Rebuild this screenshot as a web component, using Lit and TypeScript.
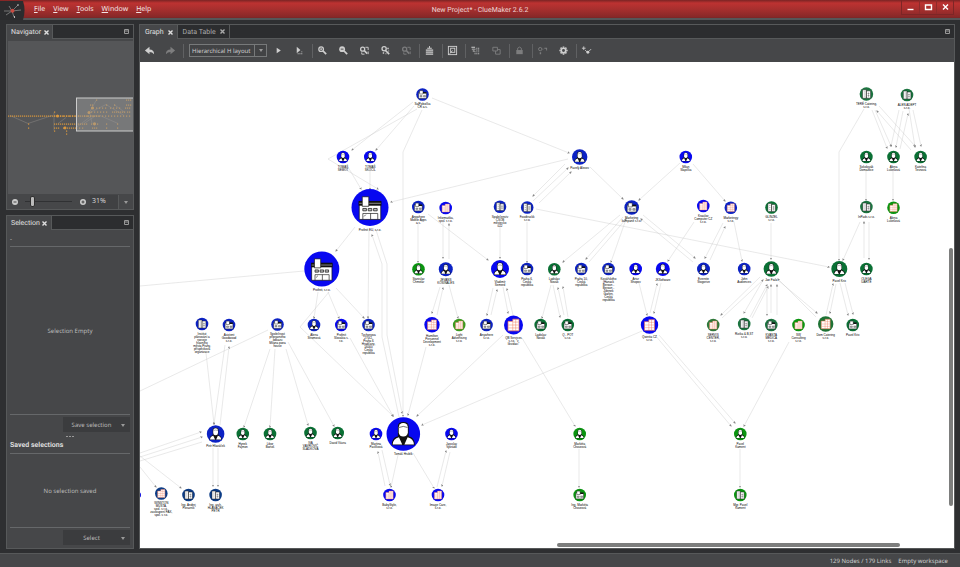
import { LitElement, html, css, svg } from "lit";
import { customElement, state } from "lit/decorators.js";

type Kind = "person" | "shop" | "office" | "firm" | "hq";
type NodeRow = [number, number, number, string, Kind, string];

const B = "#0808f0", V = "#0c22c4", N = "#0c3c86", G = "#0a7034", T = "#1c7440", L = "#0a9410";

/* x, y, radius, colour, pictogram, caption lines */
const nodes: NodeRow[] = [
  [422.5, 94.5, 6.3, V, "shop", "SalPobočka|ČR a.s."],
  [343, 157, 6.3, B, "person", "TOMÁŠ|SEMOT"],
  [370.3, 157, 6.3, B, "person", "TOMÁŠ|SKOČIL"],
  [579.7, 157, 7.7, V, "person", "Pavelý Alexov"],
  [685.8, 157, 6.3, B, "person", "Milan|Slapička"],
  [866.4, 94, 6.8, T, "office", "TERÉ Catering,|s.r.o."],
  [907, 95, 6.3, T, "office", "ALEN ADEPT|s.r.o."],
  [866.4, 157, 6.3, G, "person", "Sokolovák|Domažlice"],
  [893.5, 157, 6.3, G, "person", "Alena|Lukešová"],
  [920.6, 157, 6.3, G, "person", "Kateřina|Tesnová"],
  [370, 207.5, 18.5, B, "hq", "Profinit EU, s.r.o."],
  [418.3, 207, 6.3, V, "shop", "Anywhere|Mobile Apps|a.s."],
  [445.7, 208, 6.3, B, "firm", "Informatika,|spol. s r.o."],
  [500, 206.7, 6.3, V, "office", "Společenstv|ČSOB|městecko|022"],
  [527.2, 207.5, 6.3, V, "office", "Foodtruckk|s.r.o."],
  [631.7, 207.5, 7.3, V, "shop", "Marketing|kampaně s.r.o."],
  [703.3, 206, 6.3, B, "firm", "Krasilov|Computer CZ|s.r.o."],
  [730.8, 207.7, 6.3, V, "firm", "Marketingy|s.r.o."],
  [771.5, 207.5, 6.3, G, "office", "GLINZEL|s.r.o."],
  [866.4, 207, 6.3, T, "office", "InPads s.r.o."],
  [893.5, 207.7, 6.3, L, "firm", "Alena|Lukešová"],
  [321.8, 269, 17.5, B, "hq", "Profinit, s.r.o."],
  [418.5, 269.3, 6.3, L, "person", "Stanislav|Chmelár"],
  [445.8, 269.3, 7, V, "person", "JEVANS|KOSINALES"],
  [500, 269, 9, B, "person", "Vladimír|Semerd"],
  [527, 269, 6.3, V, "shop", "Praha 6,|Česká|republika"],
  [554.3, 269.3, 6.3, G, "person", "Ladislav|Novák"],
  [581.3, 269, 6.3, V, "shop", "Praha 10,|Česká|republika"],
  [608.5, 269, 6.3, V, "shop", "Kovářského|(Hanack|Beroun -|Beroun -|Zdenek|Garlen,|Česká|republika"],
  [635.7, 269, 6.3, B, "person", "Artur|Shopov"],
  [662.8, 269, 7, B, "person", "JKSoftware"],
  [703.5, 269, 6.5, V, "person", "Evernite|Stogorive"],
  [744.2, 269, 6.3, V, "person", "John|Audiences"],
  [771.3, 269, 7.7, G, "person", "Jan Fiala"],
  [839.3, 269, 8, G, "person", "Pavel Krix"],
  [866.4, 269, 6.3, G, "person", "OLEGA|UARTE"],
  [202, 324, 6.3, V, "office", "Institut|plánování a|rozvoje|hlavního|města Prahy,|příspěvková|organizace"],
  [229, 325, 6.3, V, "shop", "Asistent|Goodwood|s.r.o."],
  [277.5, 324.5, 6.3, V, "shop", "Společnost|přípravného|odkazu|Milana pana|house"],
  [314, 325, 6.3, V, "person", "Alena|Stromová"],
  [341.3, 325, 6.3, B, "shop", "Profinit|Slovakia s.|r.o."],
  [368.5, 325, 6.3, V, "shop", "Tychonova|270/2,|Praha 6|Hradčany,|16000|Česká|republika"],
  [432, 324.7, 7.7, B, "firm", "Hamilton|Personnel|Development|s.r.o."],
  [459.2, 325, 6.3, "#3b9a20", "firm", "Light|Advertising|s.r.o."],
  [486.5, 325, 6.3, V, "shop", "Anywhere|s.r.o."],
  [513.5, 325, 9.5, B, "firm", "QB Services|s.r.o. “v|likvidaci”"],
  [540.7, 325, 6.3, G, "shop", "Ladislav|Novák"],
  [567.8, 325, 6.3, G, "shop", "Q - POT|s.r.o."],
  [649.5, 325, 8.7, B, "firm", "Qwintia CZ|s.r.o."],
  [713.2, 325, 6.3, "#30783a", "firm", "SERVIS|CENTER,|s.r.o."],
  [744.2, 324, 6.3, T, "office", "Rizika & B,ST|s.r.o."],
  [771.3, 325, 6.3, T, "shop", "KVANTA|MEDICA|s.r.o."],
  [798.5, 325, 6.3, L, "firm", "SW|Consulting|s.r.o."],
  [825.7, 324, 7.7, "#1e7234", "firm", "Dom Catering|s.r.o."],
  [852.8, 325, 6.3, G, "shop", "Pavel Krix"],
  [215.6, 434, 8.8, V, "person", "Petr Hlaváček"],
  [242.8, 434, 6.3, G, "person", "Hynek|Fajmon"],
  [270, 434, 6.3, G, "person", "Libor|Bartoš"],
  [310.5, 433, 6.3, G, "person", "IVA|VÁVROVIČ|SLÁDKOVÁ"],
  [337.7, 433, 6.3, G, "person", "David Vávra"],
  [376, 434, 6.3, B, "person", "Martina|Pavlíková"],
  [403.3, 434, 16.8, B, "person", "Tomáš Hrubík"],
  [451.5, 434, 6.3, B, "person", "Jaroslav|Vykrádil"],
  [579.7, 434, 6.3, L, "person", "Markéta|Chourová"],
  [740.3, 434, 6.3, L, "person", "Pavel|Kament"],
  [138, 495, 3, B, "office", ""],
  [161.3, 493.5, 6.3, N, "firm", "WINSTON|MUSTA,|spol. s r.o.,|zastoupení FAX,|spol. s r.o."],
  [188.5, 495, 6.3, N, "office", "Ing. Andrej|Porazník"],
  [215.6, 495, 6.3, N, "office", "Ing. arch.|HLAVÁČEK|PETR"],
  [389.5, 495, 6.3, B, "firm", "BabyStyle,|s.r.o."],
  [438, 495, 6.3, B, "firm", "Image Care,|s.r.o."],
  [579.7, 495, 6.3, L, "shop", "Ing. Markéta|Chourová"],
  [740.3, 495, 6.3, L, "office", "Mgr. Pavel|Kament"],
];

const edges = `413,102 352,150|414,106 376,150|417,109 328,159 378,189|422,110 403,152 403,416|432,98 569,153|568,159 391,202
565,164 533,196|533,201 568,168|539,203 571,172|590,167 623,199|348,167 361,189|370,170 370,189|536,209 829,267
680,163 639,200|693,164 725,201|864,109 839,152 839,260|872,110 887,148|875,110 891,146|879,106 915,146|911,150 877,111
899,110 891,146|903,111 896,147|900,149 908,114|909,109 915,147|913,110 921,146|866,171 866,200|893,171 893,200
355,227 336,251|369,231 368,318|399,417 382,337 382,264 372,235|376,230 387,264 387,335 402,413|318,292 314,318
328,292 339,318|336,288 364,318|329,292 300,327 393,416|418,224 418,262|428,214 488,260|443,222 443,258|449,259 449,224
500,227 500,258|527,222 527,262|437,315 443,288|440,287 432,313|449,285 458,318|491,315 497,290|493,288 487,315
503,287 508,313|513,315 507,289|551,285 542,318|553,285 560,317|568,317 563,287|564,315 558,288|620,215 563,262
623,217 586,259|589,262 626,219|625,222 611,262|643,215 695,258|693,262 641,219|694,222 668,261|723,223 705,258
710,260 725,227|734,222 742,261|771,223 771,259|860,222 843,260|864,258 864,222|869,222 869,259|639,283 647,315
661,283 654,313|650,313 657,284|760,277 721,315|722,318 763,280|762,282 744,313|750,317 767,285|752,318 768,287
767,286 767,315|771,313 771,285|777,315 777,285|779,281 817,313|816,317 778,279|826,315 833,284|836,284 830,313
840,283 848,315|845,283 853,314|642,331 422,425|655,335 731,426|659,335 735,423|789,342 744,426|503,335 417,416
522,338 575,426|426,347 408,415|350,338 393,416|206,353 214,424|225,345 214,424|220,425 229,347|270,349 244,427
275,349 270,427|286,349 308,425|288,342 334,426|140,453 201,432|140,457 202,437|140,456 181,488|140,467 156,487
213,448 213,486|218,448 218,486|385,486 378,452|382,450 390,485|398,455 391,487|413,453 434,488|437,487 446,451
450,452 442,486|579,449 579,487|740,449 740,487`.split(/[|\n]/);

const plainEdges = ["304,271 140,286", "268,330 140,391", "202,442 140,461"];

const pictogram = (k: Kind) => {
  switch (k) {
    case "person":
      return svg`<path class="ink" d="M-10.600 10.300Q-10.600 3-5 2V-7Q-5-11 0-11T5-7V2Q10.600 3 10.600 10.300Z"/>
        <path class="paper" d="M-9.800 9.600Q-9.400 4.200-4 3L-1 9.600ZM9.800 9.600Q9.400 4.200 4 3L1 9.600Z"/>
        <rect class="paper" x="-4.200" y="-10.200" width="8.400" height="12.600" rx="4"/>
        <path class="hair" d="M-4-6Q0-8 4-6"/>`;
    case "hq":
      return svg`<path class="paper fine" d="M-9-5H9V10H-9Z"/><path class="ink" d="M-9.500-5.500H9.500V-1.500H-9.500Z"/>
        <path class="hatch" d="M-9-3.500H9"/><path class="paper fine" d="M-6.500-9H-1V-1H-6.500Z"/>
        <path class="grey fine" d="M-6 .8h3v2h-3zM-1.500 .8h3v2h-3zM3 .8h3v2h-3z"/><path class="hair" d="M-6 10V5H6.500V10M.5 5V10M-5 7.500L-3.500 6"/>`;
    case "shop":
      return svg`<path class="paper line" d="M-8-4H8V8H-8Z"/><path class="paper line" d="M-6-8H1V-1H-6Z"/>
        <path class="ink" d="M1-5H8V-2H1Z"/><path class="grey fine" d="M-5 2h4v3h-4zM2 2h4v3H2z"/>`;
    case "office":
      return svg`<path class="paper line" d="M-7.500-8H0V8H-7.500ZM0-6H8V8H0Z"/>
        <path class="hair" d="M-5-4h3M-5 0h3M-5 4h3M2-1h4M2 3h4M4-3V6"/>`;
    case "firm":
      return svg`<path class="paper warm" d="M-7.500-5H-1V-8H7.500V8H-7.500Z"/><path class="warm thin" d="M-7 0H7M-7 4H7M-1-4V8M3-8V8M-1-4H7"/>`;
  }
};

@customElement("clue-graph")
class ClueGraph extends LitElement {
  static styles = css`
    :host { display: block; position: relative; background: #fff; overflow: hidden; }
    .plane { display: block; width: 100%; height: 100%; }
    .edge { fill: none; stroke: #c8c8c8; stroke-width: 0.4; }
    .tip { fill: #888; }
    .ink { fill: #111; }
    .paper { fill: #fff; }
    .grey { fill: #bbb; }
    .line { stroke: #111; stroke-width: 0.9; }
    .fine { stroke: #111; stroke-width: 0.6; }
    .hair { fill: none; stroke: #222; stroke-width: 0.6; }
    .warm { stroke: #f0704c; stroke-width: 0.9; }
    .warm.thin { fill: none; stroke-width: 0.6; }
    .hatch { stroke: #777; stroke-width: 1; }
    .cap { font: 3px "Liberation Sans", Arial, sans-serif; text-anchor: middle; fill: #000; text-rendering: auto; }
    .bar { position: absolute; background: #7d7e7d; border-radius: 2px; }
    .v { right: 1px; top: 38.2%; width: 4px; height: 53.2%; }
    .h { bottom: 1px; left: 51.2%; height: 4px; width: 42.2%; }
  `;
  render() {
    return html`<svg class="plane" role="img" aria-label="Link graph">
        <defs><marker id="tip" markerUnits="userSpaceOnUse" markerWidth="3" markerHeight="3" refX="1.500" refY="1.200" orient="auto">
          <path class="tip" d="M0 0L2.500 1.200 0 2.400Z"/></marker></defs>
        <g transform="translate(-140 -62)">
          ${plainEdges.map((p) => svg`<polyline class="edge" points=${p}></polyline>`)}
          ${edges.map((p) => svg`<polyline class="edge" points=${p} marker-end="url(#tip)"></polyline>`)}
          ${nodes.map(([x, y, r, c, k, t]) => svg`
            <circle cx=${x} cy=${y} r=${r} fill=${c}></circle>
            <g transform="translate(${x} ${y}) scale(${r / (k === "person" || k === "hq" ? 15.5 : 13)})">${pictogram(k)}</g>
            ${t.split("|").map((s, i) => svg`<text class="cap" x=${x} y=${y + r + 4.5 + i * 3}>${s}</text>`)}`)}
        </g>
      </svg>
      <div class="bar v"></div><div class="bar h"></div>`;
  }
}

/* rows of the overview: start x, y, count, step */
const specks: [number, number, number, number][] = [
  [8, 115, 46, 2], [54, 111, 1, 2], [54, 115, 6, 3], [72, 115, 3, 3], [84, 115, 16, 3],
  [54, 123, 17, 2], [91, 123, 3, 3], [28, 123, 1, 2], [28, 127, 1, 2], [54, 127, 3, 2], [63, 127, 7, 2], [76, 127, 3, 3],
  [54, 130, 1, 2], [66, 130, 1, 2], [66, 133, 1, 2], [92, 127, 3, 2], [106, 123, 1, 2], [117, 123, 1, 2], [106, 127, 1, 2], [117, 127, 1, 2],
  [96, 107, 4, 3], [110, 107, 4, 3], [125, 107, 3, 2], [91, 111, 6, 3], [112, 111, 7, 2], [127, 111, 2, 2],
  [90, 104, 2, 2], [106, 104, 1, 2], [114, 104, 1, 2], [126, 104, 3, 2], [96, 99, 1, 2], [126, 99, 3, 2],
];

const I = {
  undo: svg`<path d="M1 6L6 2V5Q11 5 11 10 9 7.500 6 7.500V10Z"/>`,
  redo: svg`<path d="M11 6L6 2V5Q1 5 1 10 3 7.500 6 7.500V10Z"/>`,
  play: svg`<path d="M4 3L8.500 6 4 9Z"/>`,
  playSel: svg`<path d="M3 2L7 5.500 3 9Z"/><path d="M6 9h1v1H6zM8 9h1v1H8zM8 7h1v1H8zM4 9h1v1H4z"/>`,
  zin: svg`<circle class="h" cx="4.500" cy="4.500" r="2.500"/><path class="w" d="M6.500 6.500L10 10"/><path class="s" d="M3.500 4.500h2M4.500 3.500v2"/>`,
  zout: svg`<circle cx="4.500" cy="4.500" r="3.200"/><path class="w" d="M6.500 6.500L10 10"/><path class="d" d="M3 4.500h3"/>`,
  zfit: svg`<circle class="h" cx="4" cy="4.500" r="2.200"/><path class="w" d="M6 6.500L9 9.500"/><path class="s" d="M7 2.500h3v3M3 8v2h3M10 7v3"/>`,
  zsel: svg`<circle class="h" cx="4.500" cy="4" r="2.300"/><path class="w" d="M6 6L10 10"/><path d="M8 3h1.500v1.500H8zM9 6h1v1H9zM3 8h1.500v1.500H3zM6 9h1v1H6z"/>`,
  stack: svg`<path d="M5.500 1h1v2h2v1h-5V3h2zM2 5h8v1.300H2zM2 7.200h8v1.200H2zM2 9.200h8v1.300H2z"/>`,
  frame: svg`<rect class="s" x="1.500" y="1.500" width="9" height="9"/><rect class="s" x="4" y="3.500" width="4.500" height="4.500"/><path class="s" d="M3 9.500L6 6"/>`,
  group: svg`<path d="M1.500 2h4v1h-4zM2 4h4v1H2zM3 6h2v1H3zM7 3h1v1H7zM9 3h1v1H9zM7 5h1v1H7zM9 5h1v1H9zM5 7h1v1H5zM7 7h1v1H7zM9 7h1v1H9zM5 9h1v1H5zM7 9h1v1H7zM9 9h1v1H9z"/>`,
  ungroup: svg`<path class="s" d="M2 2.500h5v4H2zM5 6.500V10h5V5H7"/>`,
  lock: svg`<path d="M2.500 5.500h7V10h-7z"/><path class="s" d="M4 6V3.500Q6 1 8 3.500V6"/>`,
  merge: svg`<circle class="s" cx="3.500" cy="4.500" r="1.800"/><path d="M3 8h1.500v2H3zM6 4h1v1H6zM8 3h3v1H8zM10 4h1v2h-1z"/>`,
  gear: svg`<circle class="g" cx="6" cy="6" r="2.500"/><path class="g" d="M6 1.500v1.500M6 9v1.500M1.500 6H3M9 6h1.500M2.800 2.800l1 1M8.200 8.200l1 1M9.200 2.800l-1 1M3.800 8.200l-1 1"/>`,
  spark: svg`<path class="s" d="M3 1.500v4M1 3.500h4M4.500 5.500l2 2M9 6.500l2-2"/><circle cx="7.500" cy="8" r="1.600"/>`,
};

type Tool = [keyof typeof I, string, boolean?] | "sep";
const tools: Tool[] = [
  ["play", "Run layout"], ["playSel", "Run layout on selection"], "sep",
  ["zin", "Zoom in"], ["zout", "Zoom out"], ["zfit", "Fit graph"], ["zsel", "Fit selection"], ["zfit", "Zoom area", true], "sep",
  ["stack", "Extract"], "sep", ["frame", "Show frame"], "sep", ["group", "Group"], ["ungroup", "Ungroup", true], "sep",
  ["lock", "Lock", true], "sep", ["merge", "Merge", true], ["gear", "Settings"], "sep", ["spark", "Highlight"],
];

const caret = html`<svg class="caret" viewBox="0 0 4 3"><path d="M0 0H4L2 3Z"/></svg>`;

@customElement("app-root")
class AppRoot extends LitElement {
  @state() private zoom = 31;

  static styles = css`
    :host {
      display: grid; grid-template-rows: auto minmax(0, 1fr) auto; height: 100vh; min-height: 400px;
      background: #2e2f31; color: #d0d0d0; font: 6px/10px "Noto Sans", "Open Sans", sans-serif;
      text-rendering: geometricPrecision;
    }
    * { box-sizing: border-box; }
    button, input, select { font: inherit; color: inherit; text-rendering: inherit; background: none; border: 0; margin: 0; padding: 0; border-radius: 0; }
    header {
      display: grid; grid-template-columns: 1fr auto 1fr; align-items: center; height: 20px;
      background: linear-gradient(#7a2424, #bd3231 3px, #a82f2e 9px, #872828 17px, #762626 18px, #555658 18px);
    }
    .left { display: flex; align-items: center; align-self: start; height: 20px; }
    .logo { width: 25px; height: 19px; margin-right: 9px; display: block; }
    nav { display: flex; gap: 8px; color: #f4e4e4; font-size: 7px; }
    nav a { color: inherit; text-decoration: none; }
    .key { text-decoration: underline; }
    h1 { margin: 0; font: 7px/10px Roboto, sans-serif; color: #f0d8d8; }
    .wins { display: flex; justify-self: end; align-self: start; margin-right: 6px; border: 1px solid #7d2626; border-top: 0; }
    .wins button { width: 17px; height: 14px; display: grid; place-items: center; }
    .wins button + button { border-left: 1px solid #8d2b2b; }
    .wins svg { width: 9px; height: 8px; fill: none; stroke: #fff; stroke-width: 1.4; }
    main { display: grid; grid-template-columns: 128px minmax(0, 1fr); gap: 5px; padding: 4px 5px 4px 6px; min-height: 0; }
    .side { display: grid; grid-template-rows: 186px minmax(0, 1fr); gap: 5px; min-height: 0; }
    .panel { display: flex; flex-direction: column; border: 1px solid #57595a; background: #464749; min-height: 0; min-width: 0; }
    .tabs { display: flex; height: 14px; flex: none; background: #2c2d2f; border-bottom: 1px solid #57595a; font: 7px/10px Roboto, sans-serif; }
    .tab { display: flex; align-items: center; gap: 2px; padding: 0 3px 0 4px; border-right: 1px solid #57595a; color: #aaa; }
    .tab.on { background: #464749; color: #e0e0e0; height: 14px; }
    .wide .tab { gap: 4px; padding: 0 3px 0 5px; }
    .tab button { width: 6px; height: 10px; display: grid; place-items: center; }
    .tab svg { width: 5px; height: 5px; stroke: currentColor; stroke-width: 1.4; }
    .max { margin-left: auto; margin-right: 4px; width: 5px; }
    .max svg { display: block; width: 5px; height: 5px; fill: none; stroke: #999; }
    .map { flex: 1; min-height: 0; margin: 2px 0 0 1px; background: #555658; }
    .map svg { display: block; width: 100%; height: 100%; }
    .orange { fill: #d9973e; }
    .faint { fill: none; stroke: #85827d; stroke-width: 0.6; }
    .view { fill: #999; fill-opacity: 0.5; stroke: #ccc; }
    .zoom { display: flex; align-items: center; flex: none; height: 15px; }
    .round { width: 15px; height: 14px; display: grid; place-items: center; }
    .round svg { width: 6px; height: 6px; fill: #ccc; stroke: #444; }
    .zoom input[type="range"] { appearance: none; flex: 1; width: 20px; height: 14px; margin: 0 3px; background: linear-gradient(#303133, #303133) center / 100% 1px no-repeat; }
    .zoom input[type="range"]::-webkit-slider-thumb { appearance: none; width: 5px; height: 11px; border: 1px solid #2f2f2f; border-radius: 2px; background: #bbb; }
    .pct { width: 28px; height: 14px; padding-left: 2px; background: #404143; font-size: 7px; }
    .drop { width: 15px; height: 14px; border-left: 1px solid #57595a; }
    .caret { width: 4px; height: 3px; fill: #999; }
    .body { flex: 1; display: flex; flex-direction: column; padding: 0 3px 3px; min-height: 0; }
    .info { height: 17px; padding-top: 4px; border-bottom: 1px solid #66686a; }
    .empty { display: grid; place-items: center; border-bottom: 1px solid #66686a; color: #bbb; }
    .big { flex: 168 1 0; }
    .small { flex: 73 1 0; }
    .split { align-self: flex-end; display: flex; align-items: center; width: 67px; height: 15px; margin-top: 2px; background: #3b3c3e; color: #bbb; }
    .split button { height: 15px; }
    .act { flex: 1; padding-left: 4px; }
    .more { width: 14px; }
    .dots { align-self: center; height: 8px; display: flex; align-items: center; gap: 1px; }
    .dots i { width: 2px; height: 1px; background: #999; }
    h2 { margin: 0; font: 700 7px/10px Roboto, sans-serif; height: 14px; border-bottom: 1px solid #66686a; color: #ddd; }
    .tools { display: flex; align-items: center; flex: none; height: 23px; padding-left: 1px; }
    .tool { width: 16px; margin-right: 5px; height: 16px; display: grid; place-items: center; }
    .tool svg { width: 11px; height: 11px; fill: #cfcfcf; }
    .tool.off { opacity: 0.4; }
    .tool .s { fill: none; stroke: #cfcfcf; }
    .tool .h { fill: none; stroke: #cfcfcf; stroke-width: 1.4; }
    .tool .w { fill: none; stroke: #cfcfcf; stroke-width: 1.8; }
    .tool .g { fill: none; stroke: #cfcfcf; stroke-width: 1.8; }
    .tool .d { stroke: #444; }
    .sep { width: 1px; height: 14px; background: #606163; margin-right: 1px; }
    .combo { display: grid; grid-template-columns: 1fr 12px; align-items: center; width: 78px; height: 13px; margin: 0 3px 0 4px; border: 1px solid #77797a; background: #424345; }
    .combo select { grid-area: 1 / 1 / 2 / 3; appearance: none; height: 11px; width: 100%; padding-left: 2px; outline: 0; }
    .combo .arrow { grid-area: 1 / 2; height: 11px; display: grid; place-items: center; border-left: 1px solid #77797a; pointer-events: none; }
    clue-graph { flex: 1; min-height: 0; }
    footer { display: flex; justify-content: flex-end; align-items: center; gap: 7px; height: 14px; padding: 1px 12px 0 0; background: #464749; border-top: 1px solid #57595a; }
  `;

  private closeX = svg`<path d="M0.500 0.500L4.500 4.500M4.500 0.500L0.500 4.500"/>`;

  private tab(name: string, on: boolean) {
    return html`<div class="tab ${on ? "on" : ""}"><span>${name}</span>
      <button aria-label="Close ${name}"><svg viewBox="0 0 5 5">${this.closeX}</svg></button></div>`;
  }
  private max() {
    return html`<button class="max" aria-label="Maximize"><svg viewBox="0 0 5 5"><path d="M.5.5h4v4h-4zM1 2h3"/></svg></button>`;
  }
  private tool(t: Tool) {
    if (t === "sep") return html`<span class="sep"></span>`;
    return html`<button class="tool ${t[2] ? "off" : ""}" aria-label=${t[1]}><svg viewBox="0 0 12 12">${I[t[0]]}</svg></button>`;
  }

  render() {
    return html`
      <header>
        <div class="left">
          <svg class="logo" viewBox="0 0 25 19"><path d="M0 0H23Q26 9 23 19H0Z" fill="#2b2c2e"/>
            <path d="M4 10L12 10 18 4M12 10L21 9M12 10L14 16M12 10L6 14M12 10L9 5" fill="none" stroke="#888" stroke-width="0.800"/>
            <circle cx="12.500" cy="9.700" r="2" fill="#c84b42"/><path d="M17 3.500h2v1h-2zM14 15h1v2h-1z" fill="#bbb"/></svg>
          <nav>${["File", "View", "Tools", "Window", "Help"].map((m) => html`<a href="#"><span class="key">${m[0]}</span>${m.slice(1)}</a>`)}</nav>
        </div>
        <h1>New Project* - ClueMaker 2.6.2</h1>
        <div class="wins">
          <button aria-label="Minimize"><svg viewBox="0 0 9 8"><path d="M1.500 6.500h6"/></svg></button>
          <button aria-label="Maximize"><svg viewBox="0 0 9 8"><path d="M1.500 2h6v4.500h-6z"/></svg></button>
          <button aria-label="Close"><svg viewBox="0 0 9 8"><path d="M2 1.500l5 5M7 1.500l-5 5"/></svg></button>
        </div>
      </header>
      <main>
        <div class="side">
          <section class="panel">
            <div class="tabs">${this.tab("Navigator", true)}${this.max()}</div>
            <div class="map"><svg viewBox="8 41 125 152" preserveAspectRatio="xMidYMid meet">
              <path class="faint" d="M10 115L28 123 52 115M54 112V130M84 123L96 115M58 123L66 117M76 127L92 115M90 111L96 100M88 113L106 104L124 115M92 123L90 113M114 104L125 112M100 115L118 123"/>
              ${specks.map(([x, y, n, s]) => Array.from({ length: n }, (_, i) => svg`<rect class="orange" x=${x + i * s} y=${y} width="1.200" height="1.200"/>`))}
              <circle class="orange" cx="57.500" cy="115.500" r="1.500"/><circle class="orange" cx="92.500" cy="107.500" r="1.600"/>
              <circle class="orange" cx="89" cy="112" r="1.500"/><circle class="orange" cx="94.500" cy="123.300" r="1.600"/><circle class="orange" cx="65" cy="127.500" r="1.400"/>
              <rect class="view" x="76.500" y="97.500" width="57" height="33"/>
            </svg></div>
            <div class="zoom">
              <button class="round" aria-label="Zoom out"><svg viewBox="0 0 6 6"><circle cx="3" cy="3" r="3" stroke="none"/><path d="M1.500 3h3"/></svg></button>
              <input type="range" aria-label="Zoom" min="0" max="250" .value=${String(this.zoom)}
                @input=${(e: Event) => (this.zoom = Number((e.target as HTMLInputElement).value))}>
              <button class="round" aria-label="Zoom in"><svg viewBox="0 0 6 6"><circle cx="3" cy="3" r="3" stroke="none"/><path d="M1.500 3h3M3 1.500v3"/></svg></button>
              <input class="pct" type="text" aria-label="Zoom percent" .value=${this.zoom + "%"}>
              <button class="drop" aria-label="Zoom presets">${caret}</button>
            </div>
          </section>
          <section class="panel">
            <div class="tabs">${this.tab("Selection", true)}${this.max()}</div>
            <div class="body">
              <div class="info">-</div>
              <div class="empty big">Selection Empty</div>
              <div class="split"><button class="act">Save selection</button><button class="more" aria-label="Save options">${caret}</button></div>
              <div class="dots"><i></i><i></i><i></i></div>
              <h2>Saved selections</h2>
              <div class="empty small">No selection saved</div>
              <div class="split"><button class="act">Select</button><button class="more" aria-label="Select options">${caret}</button></div>
            </div>
          </section>
        </div>
        <section class="panel">
          <div class="tabs wide">${this.tab("Graph", true)}${this.tab("Data Table", false)}${this.max()}</div>
          <div class="tools">
            ${this.tool(["undo", "Undo"])}${this.tool(["redo", "Redo", true])}<span class="sep"></span>
            <div class="combo"><select aria-label="Layout"><option>Hierarchical H layout</option><option>Organic layout</option></select><span class="arrow">${caret}</span></div>
            ${tools.map((t) => this.tool(t))}
          </div>
          <clue-graph></clue-graph>
        </section>
      </main>
      <footer><span>129 Nodes / 179 Links</span><span>Empty workspace</span></footer>`;
  }
}
